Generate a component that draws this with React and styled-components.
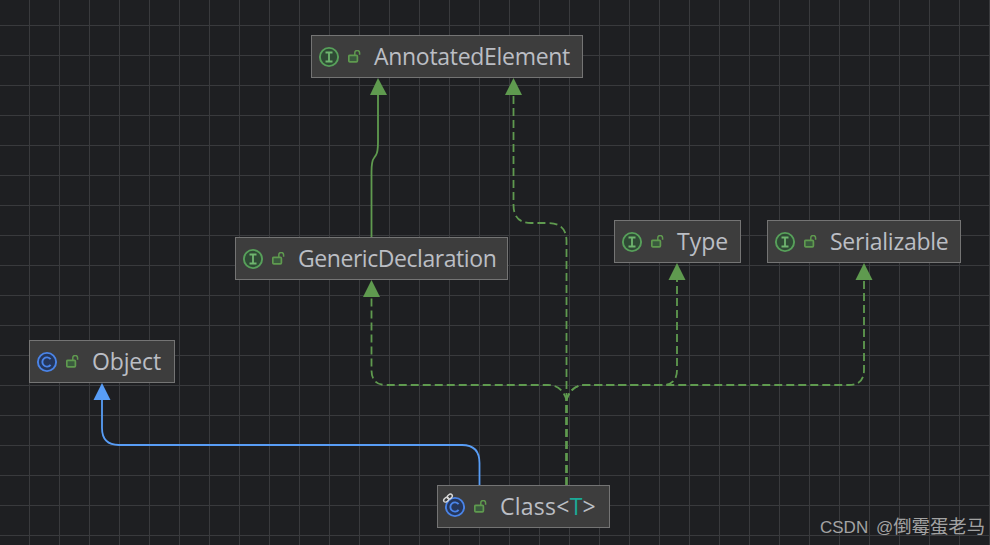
import React from 'react';
import styled, { createGlobalStyle } from 'styled-components';

const GlobalStyle = createGlobalStyle`
  html, body {
    margin: 0;
    padding: 0;
    background: #1e1f22;
  }
`;

const GREEN = '#5f9a4f';
const BLUE = '#589df6';

const nodes = [
  { name: 'AnnotatedElement', kind: 'I', x: 311, y: 35, w: 272, tracking: -0.3 },
  { name: 'GenericDeclaration', kind: 'I', x: 235, y: 237, w: 273, tracking: -0.44 },
  { name: 'Type', kind: 'I', x: 614, y: 220, w: 127 },
  { name: 'Serializable', kind: 'I', x: 767, y: 220, w: 194, tracking: -0.25 },
  { name: 'Object', kind: 'C', x: 29, y: 340, w: 146, tracking: -0.15 },
  { name: 'Class', generic: 'T', kind: 'C', x: 437, y: 485, w: 173, link: true, tracking: 0.25 },
];

const Canvas = styled.div`
  position: relative;
  width: 990px;
  height: 545px;
  overflow: hidden;
  background-color: #1e1f22;
  background-image:
    linear-gradient(to right, #393a3d 1px, transparent 1px),
    linear-gradient(to bottom, #393a3d 1px, transparent 1px);
  background-size: 30px 30px;
  background-position: 29px 25px;
`;

const Edges = styled.svg`
  position: absolute;
  left: 0;
  top: 0;
`;

const Node = styled.div`
  position: absolute;
  left: ${(p) => p.$x}px;
  top: ${(p) => p.$y}px;
  width: ${(p) => p.$w}px;
  height: 43px;
  box-sizing: border-box;
  display: flex;
  align-items: center;
  padding-left: 6px;
  background: #3d3d3d;
  border: 1px solid #747474;
`;

const KindIcon = styled.svg`
  flex: none;
  width: 22px;
  height: 22px;
  overflow: visible;
`;

const LockIcon = styled.svg`
  flex: none;
  width: 14px;
  height: 14px;
  margin-left: 8px;
`;

const Label = styled.span`
  margin-left: 12px;
  font-family: 'Open Sans', 'Noto Sans', sans-serif;
  font-size: 23px;
  line-height: 1;
  letter-spacing: ${(p) => p.$tracking || 0}px;
  color: #bbbec4;
  white-space: nowrap;
`;

const Generic = styled.span`
  color: #1aab98;
`;

const Watermark = styled.div`
  position: absolute;
  left: 820px;
  top: 516px;
  font-family: 'Liberation Sans', 'Noto Sans CJK SC', sans-serif;
  font-size: 17px;
  line-height: 22px;
  word-spacing: 3px;
  color: #a3a3a3;
  white-space: nowrap;
`;

const WatermarkName = styled.span`
  font-size: 18.4px;
`;

const Kind = ({ kind, link }) => {
  const isInterface = kind === 'I';
  const ring = isInterface ? '#57a05a' : '#4a84e8';
  const fill = isInterface ? '#2f4a35' : '#25365a';
  return (
    <KindIcon viewBox="0 0 22 22">
      <circle cx="11" cy="11" r="9.1" fill={fill} stroke={ring} strokeWidth="1.9" />
      {isInterface ? (
        <path d="M7.5 6.5h7M7.5 15.5h7M11 6.5v9" fill="none" stroke="#6fb56f" strokeWidth="1.8" />
      ) : (
        <path d="M14.6 8.2a4.6 4.6 0 1 0 0 5.6" fill="none" stroke={ring} strokeWidth="1.9" />
      )}
      {link && (
        <g fill="none" stroke="#d8d8d8" strokeWidth="1.4">
          <ellipse cx="2.2" cy="3.8" rx="2.8" ry="2" transform="rotate(-40 2.2 3.8)" />
          <ellipse cx="5.8" cy="0.6" rx="2.8" ry="2" transform="rotate(-40 5.8 0.6)" />
        </g>
      )}
    </KindIcon>
  );
};

const Lock = () => (
  <LockIcon viewBox="0 0 14 14">
    <rect x="0.8" y="5.4" width="8.6" height="6.4" rx="1" fill="#3a5a3e" stroke="#5f9a4f" strokeWidth="1.7" />
    <path d="M6.8 5V3a2.4 2.4 0 0 1 4.8-.2V4.8" fill="none" stroke="#5f9a4f" strokeWidth="1.5" />
  </LockIcon>
);

const solid = ['M371.5 237V172Q371.5 161 374 158L376 155Q378 152 378 142V95'];

// every dashed edge starts at Class, so the dashes coincide on the shared trunk
const dashed = [
  'M566.5 485V241Q566.5 223 548 223H531Q513.5 223 513.5 205V95',
  'M566.5 485V400Q562 385 548 385H386Q371.5 385 371.5 370V297',
  'M566.5 485V400Q571 385 585 385H662Q677 385 677 370V280',
  'M566.5 485V400Q571 385 585 385H849Q864 385 864 370V280',
];

const heads = [
  { points: '378,78 370,95 387,95', color: GREEN },
  { points: '513.5,78 505,95 522,95', color: GREEN },
  { points: '371.5,280 363,297 380,297', color: GREEN },
  { points: '677,263 668.5,280 685.5,280', color: GREEN },
  { points: '864,263 855.5,280 872.5,280', color: GREEN },
  { points: '102,383 93.5,400 110.5,400', color: BLUE },
];

const App = () => (
  <>
    <GlobalStyle />
    <Canvas>
      <Edges width="990" height="545" viewBox="0 0 990 545">
        <g fill="none" strokeWidth="1.8">
          {solid.map((d) => (
            <path key={d} d={d} stroke={GREEN} />
          ))}
          {dashed.map((d) => (
            <path key={d} d={d} stroke={GREEN} strokeDasharray="8 4" />
          ))}
          <path d="M102 400V428Q102 445 119 445H462Q479.5 445 479.5 463V485" stroke={BLUE} />
        </g>
        {heads.map((h) => (
          <polygon key={h.points} points={h.points} fill={h.color} />
        ))}
      </Edges>
      {nodes.map((n) => (
        <Node key={n.name} $x={n.x} $y={n.y} $w={n.w}>
          <Kind kind={n.kind} link={n.link} />
          <Lock />
          <Label $tracking={n.tracking}>
            {n.name}
            {n.generic && (
              <>
                &lt;<Generic>{n.generic}</Generic>&gt;
              </>
            )}
          </Label>
        </Node>
      ))}
      <Watermark>
        CSDN @<WatermarkName>倒霉蛋老马</WatermarkName>
      </Watermark>
    </Canvas>
  </>
);

export default App;
